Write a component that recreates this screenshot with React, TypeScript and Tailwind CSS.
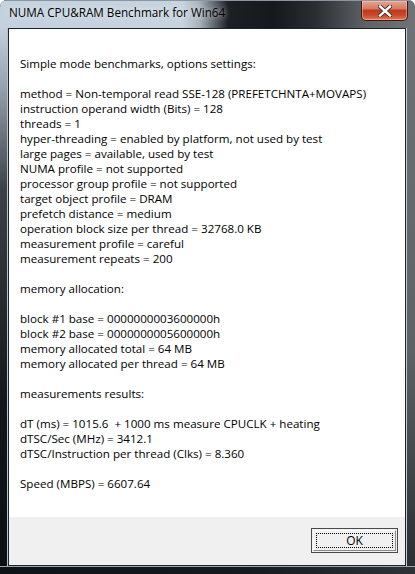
import React from "react";

const lines: string[] = [
  "",
  "Simple mode benchmarks, options settings:",
  "",
  "method = Non-temporal read SSE-128 (PREFETCHNTA+MOVAPS)",
  "instruction operand width (Bits) = 128",
  "threads = 1",
  "hyper-threading = enabled by platform, not used by test",
  "large pages = available, used by test",
  "NUMA profile = not supported",
  "processor group profile = not supported",
  "target object profile = DRAM",
  "prefetch distance = medium",
  "operation block size per thread = 32768.0 KB",
  "measurement profile = careful",
  "measurement repeats = 200",
  "",
  "memory allocation:",
  "",
  "block #1 base = 0000000003600000h",
  "block #2 base = 0000000005600000h",
  "memory allocated total = 64 MB",
  "memory allocated per thread = 64 MB",
  "",
  "measurements results:",
  "",
  "dT (ms) = 1015.6  + 1000 ms measure CPUCLK + heating",
  "dTSC/Sec (MHz) = 3412.1",
  "dTSC/Instruction per thread (Clks) = 8.360",
  "",
  "Speed (MBPS) = 6607.64",
];

const uiFont = '"Open Sans", "Noto Sans", sans-serif';

function CloseButton() {
  return (
    <div className="absolute left-[361px] top-0 w-[47px] h-[20px] rounded-b-[5px] border border-t-0 border-[#3b1a14] bg-[linear-gradient(to_bottom,#e8a493_0%,#d47a64_40%,#c0391d_50%,#c84a2a_75%,#de7d5a_100%)] shadow-[inset_0_0_0_1px_rgba(255,210,200,0.45)] flex items-center justify-center">
      <svg width="14" height="12" viewBox="0 0 14 12" aria-hidden>
        <path
          d="M2 1.5L12 10.5M12 1.5L2 10.5"
          stroke="#3a2a28"
          strokeWidth="4.2"
          strokeLinecap="square"
        />
        <path
          d="M2 1.5L12 10.5M12 1.5L2 10.5"
          stroke="#ffffff"
          strokeWidth="2.4"
          strokeLinecap="square"
        />
      </svg>
    </div>
  );
}

export default function App() {
  return (
    <div className="w-[415px] h-[574px] bg-white">
      <div className="relative w-[415px] h-[574px] rounded-t-[7px] overflow-hidden flex flex-col bg-[linear-gradient(to_right,#2c3238_0%,#1c2127_40%,#2a2e33_75%,#5d6165_100%)]">
        {/* title bar */}
        <div className="relative h-[28px] shrink-0 bg-[linear-gradient(to_right,#c4d1de_0%,#c7d3df_44%,#a9b3bc_48%,#1c1f24_55%,#15181c_66%,#2a2e33_76%,#5e6266_88%,#707376_100%)] border-t border-[#8c959e]">
          <div
            className="absolute left-[9px] top-[3px] text-[11.7px] leading-[16px] text-black [text-shadow:0_0_6px_rgba(255,255,255,0.9)]"
            style={{ fontFamily: uiFont }}
          >
            NUMA CPU&amp;RAM Benchmark for Win64
          </div>
          <CloseButton />
        </div>

        {/* body */}
        <div className="flex flex-1 min-h-0">
          <div className="w-[8px] shrink-0 bg-[linear-gradient(to_bottom,#c2cfdc_0%,#9aa6b2_10%,#3a4148_30%,#12171c_70%,#0b0f14_100%)] border-r border-[#b8c0c8]" />
          <div className="w-[398px] shrink-0 flex flex-col border border-[#1c252e] bg-[#f0f0f0]">
            <div
              className="h-[488px] shrink-0 bg-white pl-[11px] pt-[12px] text-[11.6px] leading-[15px] text-black"
              style={{ fontFamily: uiFont }}
            >
              {lines.map((l, i) => (
                <div key={i} className="h-[15px] whitespace-pre">
                  {l}
                </div>
              ))}
            </div>
            <div className="flex-1 flex justify-end items-start pt-[11px] pr-[7px]">
              <button
                type="button"
                className="w-[87px] h-[25px] border border-[#4a4a4a] bg-[#f0f0f0] p-[1px] flex"
              >
                <span className="flex-1 border border-t-[#ffffff] border-l-[#ffffff] border-r-[#8a8a8a] border-b-[#8a8a8a] p-[2px] flex">
                  <span
                    className="flex-1 border border-dotted border-black flex items-center justify-center text-[12px] leading-none text-black"
                    style={{ fontFamily: uiFont }}
                  >
                    OK
                  </span>
                </span>
              </button>
            </div>
          </div>
          <div className="flex-1 bg-[linear-gradient(to_bottom,#6e7276_0%,#5e6266_60%,#2a2e32_100%)] border-l border-[#c8ccd0]" />
        </div>

        {/* bottom frame */}
        <div className="h-[8px] shrink-0 bg-[linear-gradient(to_right,#0e1318_0%,#151a1f_60%,#2f3337_100%)] border-t border-[#9aa2aa]" />
      </div>
    </div>
  );
}
